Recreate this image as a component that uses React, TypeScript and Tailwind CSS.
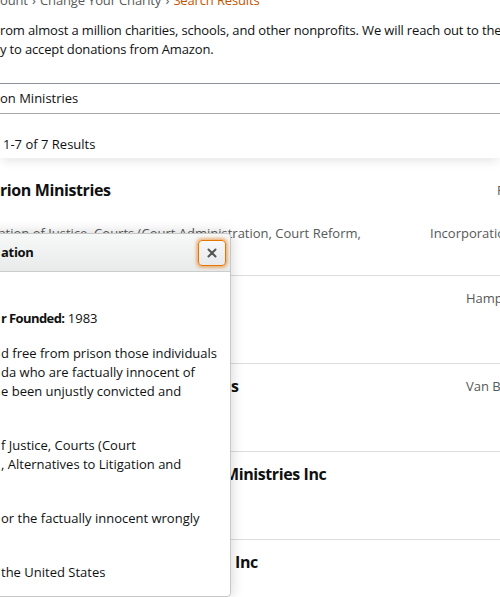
export default function App() {
  return (
    <div className="relative h-[597px] w-[500px] overflow-hidden bg-white font-['Open_Sans',sans-serif] text-[13px] leading-[19px] text-[#0f1111]">
      {/* breadcrumb, scrolled partly out of view */}
      <div className="mt-[-9px] whitespace-nowrap tracking-[-0.15px] text-[#565959]">
        ount <span className="px-[1px]">›</span> Change Your Charity{" "}
        <span className="px-[1px]">›</span> <span className="text-[#c45500]">Search Results</span>
      </div>

      <p className="mt-[11px] whitespace-nowrap tracking-[-0.15px]">
        rom almost a million charities, schools, and other nonprofits. We will reach out to the
        <br />y to accept donations from Amazon.
      </p>

      <div className="mt-[24px] flex h-[31px] items-center border-t border-b border-t-[#8d9096] border-b-[#a6a6a6]">
        <span>on Ministries</span>
      </div>

      <div className="relative z-10 mt-[21px] pb-[4px] shadow-[0_6px_10px_-2px_rgba(0,0,0,0.09)]">
        <div className="px-[3px]">1-7 of 7 Results</div>
      </div>

      <div className="whitespace-nowrap">
        <div className="h-[118px] border-b border-[#dddddd] pt-[19px]">
          <div className="flex items-center">
            <span className="w-[497px] shrink-0 text-[16px] font-bold leading-[26px] tracking-[-0.4px]">
              rion Ministries
            </span>
            <span className="text-[#565959]">Raleigh</span>
          </div>
          <div className="mt-[21px] flex text-[#565959]">
            <span className="ml-[-28px] w-[458px] shrink-0">
              rporation of Justice, Courts (Court Administration, Court Reform,
            </span>
            <span>Incorporation</span>
          </div>
        </div>

        <div className="h-[88px] border-b border-[#dddddd] pt-[10px]">
          <div className="flex h-[24px] items-center">
            <span className="w-[466px] shrink-0" />
            <span className="text-[#565959]">Hampton</span>
          </div>
        </div>

        <div className="h-[88px] border-b border-[#dddddd] pt-[10px]">
          <div className="flex h-[24px] items-center">
            <span className="w-[466px] shrink-0 pl-[231px] text-[16px] font-bold">s</span>
            <span className="text-[#565959]">Van Buren</span>
          </div>
        </div>

        <div className="h-[88px] border-b border-[#dddddd] pt-[10px]">
          <div className="flex h-[24px] items-center">
            <span className="pl-[224px] text-[16px] font-bold tracking-[-0.4px]">Ministries Inc</span>
          </div>
        </div>

        <div className="h-[88px] pt-[10px]">
          <div className="flex h-[24px] items-center">
            <span className="pl-[235px] text-[16px] font-bold tracking-[-0.4px]">Inc</span>
          </div>
        </div>
      </div>

      {/* charity details popover */}
      <div className="absolute left-[-40px] top-[233px] z-20 h-[364px] w-[271px] rounded-[4px] border border-[#c8c8c8] bg-white shadow-[0_0_14px_rgba(0,0,0,0.18)]">
        <div className="flex h-[38px] items-center justify-between rounded-t-[4px] border-b border-[#cccccc] bg-gradient-to-b from-[#f7f8f8] to-[#e9ebeb] pl-[40px] pr-[4px]">
          <span className="text-[13px] font-bold tracking-[-0.3px]">ation</span>
          <button className="flex h-[26px] w-[28px] items-center justify-center rounded-[4px] border border-[#e77600] bg-gradient-to-b from-[#f7f8fa] to-[#e7e9ec] shadow-[0_0_3px_2px_rgba(228,121,17,0.5)]">
            <svg width="10" height="10" viewBox="0 0 10 10">
              <path d="M1.5 1.5 L8.5 8.5 M8.5 1.5 L1.5 8.5" stroke="#555" strokeWidth="2" strokeLinecap="round" />
            </svg>
          </button>
        </div>
        <div className="whitespace-nowrap pl-[40px] pt-[37px]">
          <div>
            <b className="tracking-[-0.6px]">r Founded:</b> 1983
          </div>
          <div className="mt-[16px]">
            <div>d free from prison those individuals</div>
            <div>da who are factually innocent of</div>
            <div>e been unjustly convicted and</div>
            <div className="h-[19px]" />
          </div>
          <div className="mt-[16px]">
            <div>f Justice, Courts (Court</div>
            <div>, Alternatives to Litigation and</div>
            <div className="h-[19px]" />
          </div>
          <div className="mt-[16px]">
            <div>or the factually innocent wrongly</div>
            <div className="h-[19px]" />
          </div>
          <div className="mt-[16px]">
            <div>the United States</div>
          </div>
        </div>
      </div>
    </div>
  );
}
